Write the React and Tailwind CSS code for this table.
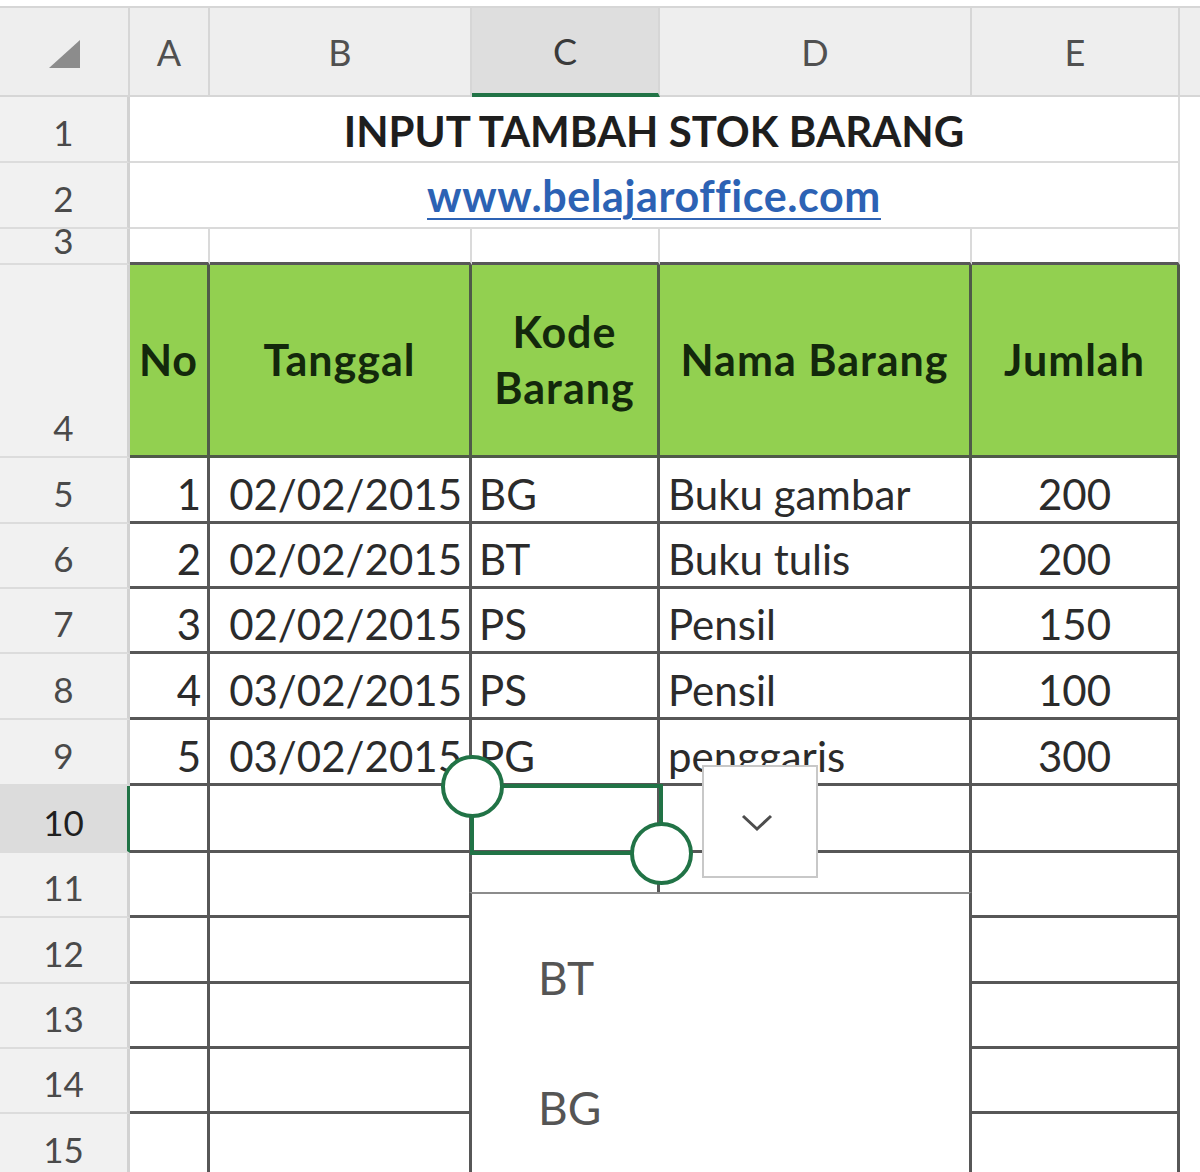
import React from 'react';

const cols = [
  { key: 'A', w: 'w-[80px]' },
  { key: 'B', w: 'w-[262px]' },
  { key: 'C', w: 'w-[188px]' },
  { key: 'D', w: 'w-[312px]' },
  { key: 'E', w: 'w-[208px]' },
];

const items = [
  { n: 5, h: 'h-[66px]', no: '1', tgl: '02/02/2015', kode: 'BG', nama: 'Buku gambar', jml: '200' },
  { n: 6, h: 'h-[65px]', no: '2', tgl: '02/02/2015', kode: 'BT', nama: 'Buku tulis', jml: '200' },
  { n: 7, h: 'h-[65px]', no: '3', tgl: '02/02/2015', kode: 'PS', nama: 'Pensil', jml: '150' },
  { n: 8, h: 'h-[66px]', no: '4', tgl: '03/02/2015', kode: 'PS', nama: 'Pensil', jml: '100' },
  { n: 9, h: 'h-[66px]', no: '5', tgl: '03/02/2015', kode: 'PG', nama: 'penggaris', jml: '300' },
];

const emptyRows = [
  { n: 10, h: 'h-[67px]' },
  { n: 11, h: 'h-[65px]' },
  { n: 12, h: 'h-[66px]' },
  { n: 13, h: 'h-[65px]' },
  { n: 14, h: 'h-[65px]' },
  { n: 15, h: 'h-[66px]' },
];

const cell = 'h-full shrink-0 border-r-[3px] border-b-[3px] border-[#575757] flex items-end pb-[6px] text-[42px] leading-none text-[#2b2b2b] overflow-hidden whitespace-nowrap';

function RowHead({ n, active, short }) {
  return (
    <div
      className={
        'w-[130px] h-full shrink-0 flex items-end justify-center overflow-hidden text-[35px] leading-none border-b-2 border-b-[#dcdcdc] border-r-[3px] ' +
        (short ? 'pb-[5px] ' : 'pb-[11px] ') +
        (active ? 'bg-[#dcdcdc] text-[#1f1f1f] border-r-[#217346]' : 'bg-[#f1f1f1] text-[#4a4a4a] border-r-[#d2d2d2]')
      }
    >
      {n}
    </div>
  );
}

function Tail() {
  return <div className="w-[20px] h-full shrink-0 bg-white" />;
}

export default function App() {
  return (
    <div className="relative w-[1200px] h-[1172px] overflow-hidden bg-white font-['Lato',sans-serif]">
      {/* column headers */}
      <div className="h-[97px] pt-[6px] bg-white">
        <div className="flex h-[91px] border-t-2 border-[#d6d6d6] bg-[#eeeeee]">
          <div className="w-[130px] h-full shrink-0 border-r-2 border-b-2 border-[#d6d6d6] flex items-center justify-center pt-[4px]">
            <svg width="31" height="28" viewBox="0 0 31 28">
              <polygon points="31,0 31,28 0,28" fill="#8c8c8c" />
            </svg>
          </div>
          {cols.map((c) => (
            <div
              key={c.key}
              className={
                c.w +
                ' h-full shrink-0 border-r-2 border-r-[#d6d6d6] flex items-center justify-center text-[36px] leading-none ' +
                (c.key === 'C'
                  ? 'bg-[#dedede] text-[#3a3a3a] border-b-4 border-b-[#217346]'
                  : 'text-[#505050] border-b-2 border-b-[#d6d6d6]')
              }
            >
              {c.key}
            </div>
          ))}
          <div className="w-[20px] h-full shrink-0 border-b-2 border-[#d6d6d6]" />
        </div>
      </div>

      {/* row 1 */}
      <div className="flex h-[66px]">
        <RowHead n={1} />
        <div className="w-[1050px] h-full shrink-0 border-b-2 border-r-2 border-[#dadada] flex items-end justify-center pb-[9px] text-[42px] leading-none font-bold text-[#1e1e1e]">
          INPUT TAMBAH STOK BARANG
        </div>
        <Tail />
      </div>

      {/* row 2 */}
      <div className="flex h-[66px]">
        <RowHead n={2} />
        <div className="w-[1050px] h-full shrink-0 border-b-2 border-r-2 border-[#dadada] flex items-end justify-center pb-[10px] text-[43px] leading-none font-bold tracking-[0.6px] text-[#2c62b4]">
          <span className="underline decoration-2 underline-offset-[6px]">www.belajaroffice.com</span>
        </div>
        <Tail />
      </div>

      {/* row 3 */}
      <div className="flex h-[36px]">
        <RowHead n={3} short />
        {cols.map((c) => (
          <div key={c.key} className={c.w + ' h-full shrink-0 border-r-2 border-r-[#dadada] border-b-[3px] border-b-[#575757]'} />
        ))}
        <Tail />
      </div>

      {/* row 4: table header */}
      <div className="flex h-[193px]">
        <RowHead n={4} />
        {[
          ['A', 'No'],
          ['B', 'Tanggal'],
          ['C', 'Kode Barang'],
          ['D', 'Nama Barang'],
          ['E', 'Jumlah'],
        ].map(([k, label], i) => (
          <div
            key={k}
            className={
              cols[i].w +
              ' h-full shrink-0 bg-[#92d050] border-r-[3px] border-b-[3px] border-[#4f5a48] flex items-center justify-center text-center text-[43px] leading-[56px] tracking-[1px] font-bold text-[#13280c]'
            }
          >
            {k === 'C' ? (
              <span>
                Kode
                <br />
                Barang
              </span>
            ) : (
              label
            )}
          </div>
        ))}
        <Tail />
      </div>

      {/* data rows */}
      {items.map((r) => (
        <div key={r.n} className={'flex ' + r.h}>
          <RowHead n={r.n} />
          <div className={cell + ' w-[80px] justify-end pr-[6px]'}>{r.no}</div>
          <div className={cell + ' w-[262px] justify-end pr-[7px]'}>{r.tgl}</div>
          <div className={cell + ' w-[188px] pl-[7px]'}>{r.kode}</div>
          <div className={cell + ' w-[312px] pl-[8px]'}>{r.nama}</div>
          <div className={cell + ' w-[208px] justify-center'}>{r.jml}</div>
          <Tail />
        </div>
      ))}

      {emptyRows.map((r) => (
        <div key={r.n} className={'flex ' + r.h}>
          <RowHead n={r.n} active={r.n === 10} />
          {cols.map((c) => (
            <div key={c.key} className={cell + ' ' + c.w} />
          ))}
          <Tail />
        </div>
      ))}

      {/* selection on C10 with touch handles */}
      <div className="absolute left-[470px] top-[784px] w-[193px] h-[71px] border-4 border-[#217346]" />
      <div className="absolute left-[441px] top-[755px] w-[63px] h-[63px] rounded-full border-4 border-[#217346] bg-white" />
      <div className="absolute left-[630px] top-[822px] w-[63px] h-[63px] rounded-full border-4 border-[#217346] bg-white" />

      {/* dropdown arrow button */}
      <div className="absolute left-[702px] top-[765px] w-[116px] h-[113px] bg-white border-2 border-[#c8c8c8] flex items-center justify-center pr-[6px]">
        <svg width="34" height="20" viewBox="0 0 34 20">
          <polyline points="3,4 17,17 31,4" fill="none" stroke="#4d4d4d" strokeWidth="3" />
        </svg>
      </div>

      {/* dropdown list */}
      <div className="absolute left-[469px] top-[892px] w-[503px] h-[300px] bg-white border-l-[3px] border-r-[3px] border-[#575757] border-t-2 border-t-[#8c8c8c] pl-[66px] pt-[61px] flex flex-col gap-[84px] text-[46px] leading-none text-[#555555]">
        <div>BT</div>
        <div>BG</div>
      </div>
    </div>
  );
}
